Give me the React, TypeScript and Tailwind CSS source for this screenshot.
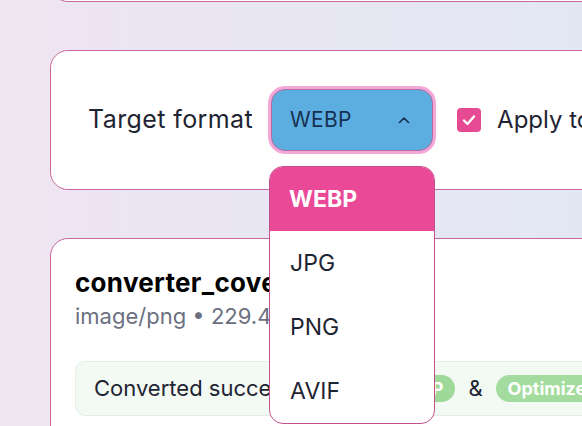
import React, { useState } from 'react';

const formats = ['WEBP', 'JPG', 'PNG', 'AVIF'];

export default function App() {
    // 選択中のフォーマット
    const [format, setFormat] = useState('WEBP');
    const [applyAll, setApplyAll] = useState(true);

    return (
        <div className="relative h-[426px] w-full overflow-hidden bg-gradient-to-r from-[#efe5f1] via-[#e8e6f3] to-[#e3e7f4] font-['Inter',sans-serif] text-[#1f2433]">
            <div className="flex w-[900px] flex-col gap-12 pl-[50px]">
                {/* 上のカード（ほぼ画面外） */}
                <div className="-mt-[60px] h-[62px] rounded-[18px] border border-[#c9679f] bg-white" />

                {/* 変換設定 */}
                <div className="flex h-[140px] items-center rounded-[18px] border border-[#c9679f] bg-white pl-[37px]">
                    <span className="text-[25px] tracking-[0.4px]">Target format</span>

                    <div className="relative ml-[18px]">
                        <button className="flex h-[62px] w-[162px] items-center justify-between rounded-[14px] border border-[#b86aa5] bg-[#5cade0] pl-[18px] pr-[22px] text-[21px] tracking-[0.3px] text-[#16304f] ring-[3px] ring-[#f3a9d6]">
                            <span>{format}</span>
                            <svg width="12" height="8" viewBox="0 0 12 8" fill="none">
                                <path d="M1.5 6.5 L6 2 L10.5 6.5" stroke="#16304f" strokeWidth="1.6" strokeLinecap="round" strokeLinejoin="round" />
                            </svg>
                        </button>

                        {/* ドロップダウン */}
                        <ul className="absolute left-[-2px] top-[77px] z-10 w-[166px] overflow-hidden rounded-[14px] border border-[#c2508c] bg-white">
                            {formats.map((f) => (
                                <li
                                    key={f}
                                    onClick={() => setFormat(f)}
                                    className={
                                        f === format
                                            ? 'flex h-[64px] items-center bg-[#ea4997] pl-[19px] text-[23px] font-bold text-white'
                                            : 'flex h-[64px] items-center pl-[20px] text-[23px] text-[#1f2433]'
                                    }
                                >
                                    {f}
                                </li>
                            ))}
                        </ul>
                    </div>

                    <label className="ml-[24px] flex items-center gap-[16px] text-[24px]">
                        <span
                            onClick={() => setApplyAll(!applyAll)}
                            className="flex h-[24px] w-[24px] items-center justify-center rounded-[4px] bg-[#e54a93]"
                        >
                            {applyAll && (
                                <svg width="16" height="16" viewBox="0 0 16 16" fill="none">
                                    <path d="M3 8.5 L6.5 12 L13 4.5" stroke="white" strokeWidth="2.4" strokeLinecap="round" strokeLinejoin="round" />
                                </svg>
                            )}
                        </span>
                        <span className="whitespace-nowrap">Apply to all</span>
                    </label>
                </div>

                {/* ファイルカード */}
                <div className="h-[300px] rounded-[18px] border border-[#c9679f] bg-white pl-[24px] pt-[26px]">
                    <div className="text-[26px] font-bold leading-[36px] tracking-[0.3px] text-black">converter_cover.png</div>
                    <div className="text-[22px] leading-[30px] text-[#6b7080]">image/png • 229.4 KB</div>

                    <div className="mt-[30px] flex h-[55px] w-[720px] items-center gap-[13px] rounded-[10px] border border-[#e2f0e4] bg-[#f3faf4] pl-[18px] text-[22px]">
                        <span>Converted successfully to</span>
                        <span className="flex h-[27px] items-center rounded-full bg-[#9ed999] px-[12px] text-[18px] font-bold text-white">WEBP</span>
                        <span>&amp;</span>
                        <span className="flex h-[27px] items-center rounded-full bg-[#a3dc9e] px-[12px] text-[18px] font-bold text-white">Optimized</span>
                    </div>
                </div>
            </div>
        </div>
    );
}
